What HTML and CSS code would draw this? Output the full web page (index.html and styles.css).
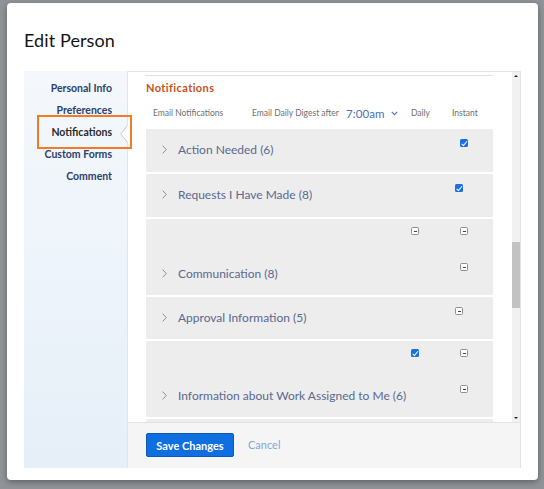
FILE: index.html
```html
<!DOCTYPE html>
<html>
<head>
<meta charset="utf-8">
<link rel="stylesheet" href="styles.css">
</head>
<body>
<div class="modal">
  <h1 class="title">Edit Person</h1>
  <div class="body">
    <nav class="nav">
      <a class="nav-item">Personal Info</a>
      <a class="nav-item">Preferences</a>
      <a class="nav-item active">Notifications</a>
      <a class="nav-item">Custom Forms</a>
      <a class="nav-item">Comment</a>
    </nav>
    <svg class="notch" width="8" height="18" viewBox="0 0 8 18"><polygon points="8,0.5 1,9 8,17.5" fill="#ffffff"/><polyline points="7.5,0.5 0.8,9 7.5,17.5" fill="none" stroke="#c5cad2" stroke-width="1"/></svg>
    <div class="annot"></div>
    <section class="panel">
      <div class="scroll">
        <div class="scroll-content">
          <div class="topline"></div>
          <h2 class="section-title">Notifications</h2>
          <div class="hdr">
            <span class="hdr-c1">Email Notifications</span>
            <span class="hdr-c2">Email Daily Digest after <span class="time">7:00am</span><svg class="time-chev" width="7" height="5" viewBox="0 0 7 5"><polyline points="0.7,0.8 3.5,3.6 6.3,0.8" fill="none" stroke="#4a72c0" stroke-width="1.1"/></svg></span>
            <span class="hdr-c3">Daily</span>
            <span class="hdr-c4">Instant</span>
          </div>
          <div class="rows">
            <div class="row">
              <div class="line">
                <div class="name"><svg class="chev" width="5" height="9" viewBox="0 0 5 9"><polyline points="0.6,0.6 4.3,4.5 0.6,8.4" fill="none" stroke="#7d8594" stroke-width="0.9"/></svg>Action Needed (6)</div>
                <div class="cell daily"></div>
                <div class="cell instant"><span class="cb checked"></span></div>
              </div>
            </div>
            <div class="row">
              <div class="line">
                <div class="name"><svg class="chev" width="5" height="9" viewBox="0 0 5 9"><polyline points="0.6,0.6 4.3,4.5 0.6,8.4" fill="none" stroke="#7d8594" stroke-width="0.9"/></svg>Requests I Have Made (8)</div>
                <div class="cell daily"></div>
                <div class="cell instant shift"><span class="cb checked"></span></div>
              </div>
            </div>
            <div class="row tall">
              <div class="line">
                <div class="name"></div>
                <div class="cell daily up"><span class="cb minus"></span></div>
                <div class="cell instant up"><span class="cb minus"></span></div>
              </div>
              <div class="line">
                <div class="name"><svg class="chev" width="5" height="9" viewBox="0 0 5 9"><polyline points="0.6,0.6 4.3,4.5 0.6,8.4" fill="none" stroke="#7d8594" stroke-width="0.9"/></svg>Communication (8)</div>
                <div class="cell daily"></div>
                <div class="cell instant"><span class="cb minus"></span></div>
              </div>
            </div>
            <div class="row short">
              <div class="line">
                <div class="name"><svg class="chev" width="5" height="9" viewBox="0 0 5 9"><polyline points="0.6,0.6 4.3,4.5 0.6,8.4" fill="none" stroke="#7d8594" stroke-width="0.9"/></svg>Approval Information (5)</div>
                <div class="cell daily"></div>
                <div class="cell instant shift"><span class="cb minus"></span></div>
              </div>
            </div>
            <div class="row tall">
              <div class="line">
                <div class="name"></div>
                <div class="cell daily up"><span class="cb checked"></span></div>
                <div class="cell instant up"><span class="cb minus"></span></div>
              </div>
              <div class="line">
                <div class="name"><svg class="chev" width="5" height="9" viewBox="0 0 5 9"><polyline points="0.6,0.6 4.3,4.5 0.6,8.4" fill="none" stroke="#7d8594" stroke-width="0.9"/></svg>Information about Work Assigned to Me (6)</div>
                <div class="cell daily"></div>
                <div class="cell instant"><span class="cb minus"></span></div>
              </div>
            </div>
            <div class="row"></div>
          </div>
        </div>
        <div class="scrollbar">
          <svg class="sb-arrow" width="8" height="8" viewBox="0 0 8 8"><polygon points="2,5 6,5 4,3" fill="#222"/></svg>
          <div class="sb-thumb"></div>
          <div class="sb-space"></div>
          <svg class="sb-arrow" width="8" height="8" viewBox="0 0 8 8"><polygon points="2,3 6,3 4,5" fill="#222"/></svg>
        </div>
      </div>
      <div class="footer">
        <button class="btn-primary">Save Changes</button>
        <a class="btn-link">Cancel</a>
      </div>
    </section>
  </div>
</div>
</body>
</html>
```
FILE: styles.css
```css
* { box-sizing: border-box; }
html, body { margin: 0; padding: 0; }
body {
  width: 544px;
  height: 489px;
  overflow: hidden;
  background: #909398;
  font-family: Lato, "Open Sans", Arial, sans-serif;
  padding: 3px 0 0 7px;
}
.modal {
  width: 531px;
  height: 477px;
  background: #ffffff;
  border-radius: 4px;
  box-shadow: 0 2px 6px rgba(0,0,0,0.35);
  display: flex;
  flex-direction: column;
}
.title {
  margin: 0;
  padding: 26px 17px 20px;
  font-size: 18px;
  line-height: 22px;
  font-weight: 400;
  color: #141414;
  letter-spacing: 0.1px;
}
.body {
  position: relative;
  display: flex;
  margin: 0 17px;
  height: 397px;
}
.nav {
  width: 103px;
  flex: none;
  background: linear-gradient(#f4f8fc, #e6eff8);
  padding: 6px 15px 0 0;
  display: flex;
  flex-direction: column;
  align-items: flex-end;
}
.nav-item {
  font-size: 10.5px;
  line-height: 22px;
  font-weight: 700;
  color: #2b3f6e;
  white-space: nowrap;
}
.nav-item.active { color: #2a2a2a; }
.notch {
  position: absolute;
  left: 96px;
  top: 54px;
}
.annot {
  position: absolute;
  left: 13px;
  top: 44px;
  width: 95px;
  height: 34px;
  border: 2.5px solid #f47a26;
}
.panel {
  flex: 1;
  border: 1px solid #e4e4e4;
  border-bottom: none;
  display: flex;
  flex-direction: column;
}
.scroll {
  height: 350px;
  display: flex;
  overflow: hidden;
}
.scroll-content {
  flex: 1;
  padding: 3px 19px 0 18px;
  overflow: hidden;
}
.topline {
  height: 1px;
  background: #e0e0e0;
  margin-left: -1px;
}
.section-title {
  margin: 5px 0 0;
  font-size: 11px;
  line-height: 14px;
  font-weight: 700;
  color: #c4521c;
  letter-spacing: 0.4px;
}
.hdr {
  height: 34px;
  display: flex;
  align-items: center;
  padding: 2px 0 0 7px;
  font-size: 8.5px;
  color: #6f6f6f;
  white-space: nowrap;
}
.hdr-c1 { width: 99px; }
.hdr-c2 { width: 159px; display: flex; align-items: center; }
.hdr-c3 { width: 41px; }
.time {
  font-size: 11.5px;
  color: #4870bd;
  margin-left: 7px;
  letter-spacing: 0.1px;
}
.time-chev { margin-left: 6px; }
.rows {
  display: flex;
  flex-direction: column;
  gap: 2px;
}
.row {
  background: #ededed;
  padding-bottom: 9px;
  min-height: 43px;
}
.row.short { padding-bottom: 8px; min-height: 42px; }
.row.tall { padding-bottom: 8px; }
.line {
  height: 34px;
  display: flex;
}
.name {
  flex: 1;
  padding: 13px 0 0 16px;
  font-size: 12px;
  line-height: 16px;
  color: #5a6890;
  white-space: nowrap;
  display: flex;
  align-items: flex-start;
}
.chev {
  margin: 3px 11px 0 0;
  flex: none;
}
.cell { padding-top: 10px; }
.cell.up { padding-top: 8px; }
.cell.daily { width: 49px; }
.cell.instant { width: 33px; }
.cell.shift { margin-left: -5px; width: 38px; }
.cb {
  display: block;
  width: 8px;
  height: 8px;
  border-radius: 1.5px;
  position: relative;
}
.cb.checked {
  background: #1a6fe3;
}
.cb.checked::after {
  content: "";
  position: absolute;
  left: 2.6px;
  top: 0.8px;
  width: 2px;
  height: 4.5px;
  border: solid #ffffff;
  border-width: 0 1.4px 1.4px 0;
  transform: rotate(40deg);
}
.cb.minus {
  background: #ffffff;
  border: 1px solid #8f8f8f;
}
.cb.minus::after {
  content: "";
  position: absolute;
  left: 1.5px;
  top: 2.5px;
  width: 3px;
  height: 1.2px;
  background: #444;
}
.scrollbar {
  width: 8px;
  flex: none;
  background: #f1f1f1;
  display: flex;
  flex-direction: column;
}
.sb-arrow { flex: none; }
.sb-thumb {
  margin-top: 162px;
  height: 66px;
  background: #c2c2c2;
}
.sb-space { flex: 1; }
.footer {
  flex: 1;
  background: #f5f5f5;
  border-top: 1px solid #e2e2e2;
  display: flex;
  align-items: flex-start;
  padding: 10px 18px 0;
  gap: 14px;
}
.btn-primary {
  width: 88px;
  height: 24px;
  padding: 0;
  background: #0f6fe0;
  border: 1px solid #0a59b8;
  border-radius: 2px;
  color: #ffffff;
  font-family: Lato, "Open Sans", Arial, sans-serif;
  font-size: 11px;
  font-weight: 700;
}
.btn-link {
  font-size: 11px;
  line-height: 24px;
  color: #84a5de;
}
```
